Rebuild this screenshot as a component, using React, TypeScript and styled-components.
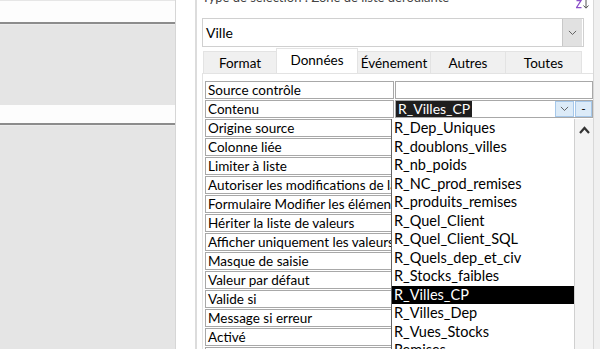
import styled, { createGlobalStyle } from 'styled-components'

const GlobalStyle = createGlobalStyle`
  html, body { margin: 0; padding: 0; background: #fff; }
  body { font-family: Lato, "Noto Sans", sans-serif; color: #000; }
`

const rows = [
  'Source contrôle',
  'Contenu',
  'Origine source',
  'Colonne liée',
  'Limiter à liste',
  'Autoriser les modifications de la liste de valeurs',
  'Formulaire Modifier les éléments de liste',
  'Hériter la liste de valeurs',
  'Afficher uniquement les valeurs de la source',
  'Masque de saisie',
  'Valeur par défaut',
  'Valide si',
  'Message si erreur',
  'Activé',
  'Verrouillé',
]

const listItems = [
  'R_Dep_Uniques',
  'R_doublons_villes',
  'R_nb_poids',
  'R_NC_prod_remises',
  'R_produits_remises',
  'R_Quel_Client',
  'R_Quel_Client_SQL',
  'R_Quels_dep_et_civ',
  'R_Stocks_faibles',
  'R_Villes_CP',
  'R_Villes_Dep',
  'R_Vues_Stocks',
  'Remises',
]

const tabs = ['Format', 'Données', 'Événement', 'Autres', 'Toutes']
const tabWidths = [74, 82, 74, 76, 77]

const Chevron = ({ size = 9 }: { size?: number }) => (
  <svg width={size} height={size * 0.6} viewBox="0 0 10 6">
    <path d="M1 1 L5 5 L9 1" fill="none" stroke="#555" strokeWidth="1" />
  </svg>
)

const App = () => {
  return (
    <>
      <GlobalStyle />
      <Screen>
        <LeftPane>
          <TopBand />
          <Rule />
          <GrayBlock $height={80} />
          <WhiteBand />
          <Rule />
          <GrayBlock $grow />
        </LeftPane>
        <Gutter />
        <Sheet>
          <Caption>
            <CaptionText>Type de sélection : Zone de liste déroulante</CaptionText>
            <SortIcon>
              <svg width="14" height="9" viewBox="0 0 14 9">
                <path d="M0.5 0.6 H5 L0.5 7.6 H5.5" fill="none" stroke="#8b4fc9" strokeWidth="1.2" />
                <path d="M10 0 V8 M7.5 5.5 L10 8.2 L12.5 5.5" fill="none" stroke="#555" strokeWidth="1" />
              </svg>
            </SortIcon>
          </Caption>
          <Combo>
            <ComboText>Ville</ComboText>
            <ComboButton>
              <Chevron />
            </ComboButton>
          </Combo>
          <TabRow>
            {tabs.map((t, i) => (
              <Tab key={t} $active={i === 1} style={{ width: tabWidths[i] }}>
                {t}
              </Tab>
            ))}
          </TabRow>
          <Panel>
            <Grid>
              {rows.map((r, i) => (
                <Row key={r}>
                  <Label>{r}</Label>
                  <Value>
                    {i === 1 && (
                      <>
                        <Selected>R_Villes_CP</Selected>
                        <Spacer />
                        <RowButton $wide>
                          <Chevron />
                        </RowButton>
                        <RowButton>-</RowButton>
                      </>
                    )}
                  </Value>
                </Row>
              ))}
            </Grid>
            <DropList>
              <Items>
                {listItems.map((it) => (
                  <Item key={it} $active={it === 'R_Villes_CP'}>
                    {it}
                  </Item>
                ))}
              </Items>
              <ScrollTrack>
                <svg width="11" height="8" viewBox="0 0 11 8">
                  <path d="M1 7 L5.5 2 L10 7" fill="none" stroke="#333" strokeWidth="2.2" />
                </svg>
              </ScrollTrack>
            </DropList>
          </Panel>
        </Sheet>
        <SideBar />
      </Screen>
    </>
  )
}

export default App

const Screen = styled.div`
  display: flex;
  width: 600px;
  height: 349px;
  overflow: hidden;
  background: #fff;
`

const LeftPane = styled.div`
  width: 175px;
  flex: none;
  display: flex;
  flex-direction: column;
  border-right: 1px solid #d6d6d6;
`

const TopBand = styled.div`
  height: 21px;
  flex: none;
  border-top: 1px solid #e6e6e6;
  background: #fdfdfd;
`

const Rule = styled.div`
  height: 2px;
  flex: none;
  background: #8c8c8c;
`

const GrayBlock = styled.div<{ $height?: number; $grow?: boolean }>`
  flex: ${(p) => (p.$grow ? '1' : 'none')};
  height: ${(p) => (p.$height ? `${p.$height}px` : 'auto')};
  background: #e5e5e5;
  border-top: 1px solid #ececec;
`

const WhiteBand = styled.div`
  height: 18px;
  flex: none;
  background: #fdfdfd;
`

const Gutter = styled.div`
  width: 19px;
  flex: none;
  border-right: 2px solid #dcdcdc;
  background: #fff;
`

const Sheet = styled.div`
  flex: 1;
  display: flex;
  flex-direction: column;
  padding-left: 5px;
  font-size: 13px;
`

const Caption = styled.div`
  display: flex;
  justify-content: space-between;
  align-items: flex-start;
  height: 18px;
  flex: none;
  padding-right: 3px;
  overflow: hidden;
`

const CaptionText = styled.span`
  margin-top: -11px;
  font-size: 13px;
  line-height: 16px;
  color: #444;
  white-space: nowrap;
`

const SortIcon = styled.span`
  display: flex;
`

const Combo = styled.div`
  display: flex;
  align-items: center;
  width: 382px;
  height: 29px;
  flex: none;
  box-sizing: border-box;
  border: 1px solid #d0d0d0;
  background: #fff;
`

const ComboText = styled.div`
  flex: 1;
  padding-left: 3px;
  font-size: 14px;
`

const ComboButton = styled.div`
  display: flex;
  align-items: center;
  justify-content: center;
  width: 20px;
  height: 27px;
  margin-right: 1px;
  box-sizing: border-box;
  background: #e1e1e1;
  border-left: 1px solid #c8c8c8;
`

const TabRow = styled.div`
  display: flex;
  align-items: flex-end;
  height: 26px;
  flex: none;
  margin-left: 1px;
`

const Tab = styled.div<{ $active?: boolean }>`
  display: flex;
  align-items: center;
  justify-content: center;
  box-sizing: border-box;
  height: ${(p) => (p.$active ? '25px' : '22px')};
  padding-bottom: ${(p) => (p.$active ? '3px' : '0')};
  background: ${(p) => (p.$active ? '#fff' : '#f0f0f0')};
  border: 1px solid #e3e3e3;
  border-bottom: none;
  margin-right: -1px;
  font-size: 13.5px;
`

const Panel = styled.div`
  position: relative;
  flex: 1;
  border-left: 1px solid #e3e3e3;
  border-top: 1px solid #e3e3e3;
  padding: 7px 0 0 2px;
  overflow: hidden;
`

const Grid = styled.div`
  display: flex;
  flex-direction: column;
  gap: 1px;
  width: 388px;
`

const Row = styled.div`
  display: flex;
  gap: 1px;
  height: 18px;
`

const Label = styled.div`
  width: 189px;
  flex: none;
  box-sizing: border-box;
  border: 1px solid #a8a8a8;
  padding-left: 2px;
  font-size: 13.5px;
  line-height: 16px;
  white-space: nowrap;
  overflow: hidden;
`

const Value = styled.div`
  flex: 1;
  display: flex;
  align-items: stretch;
  box-sizing: border-box;
  border: 1px solid #a8a8a8;
`

const Selected = styled.span`
  background: #1e1e1e;
  color: #fff;
  padding: 0 2px;
  font-size: 14px;
  line-height: 16px;
`

const Spacer = styled.span`
  flex: 1;
`

const RowButton = styled.span<{ $wide?: boolean }>`
  display: flex;
  align-items: center;
  justify-content: center;
  width: ${(p) => (p.$wide ? '19px' : '17px')};
  margin-left: ${(p) => (p.$wide ? '0' : '1px')};
  box-sizing: border-box;
  background: #dcebf8;
  border: 1px solid #a6c8ea;
  font-size: 12px;
  line-height: 1;
`

const DropList = styled.div`
  position: absolute;
  left: 188px;
  top: 45px;
  width: 202px;
  bottom: 0;
  display: flex;
  background: #fff;
  border-left: 1px solid #646464;
`

const Items = styled.div`
  flex: 1;
  display: flex;
  flex-direction: column;
  border-right: 1px solid #d0d0d0;
`

const Item = styled.div<{ $active?: boolean }>`
  height: 18.5px;
  flex: none;
  line-height: 18px;
  padding-left: 2px;
  font-size: 14.5px;
  white-space: nowrap;
  background: ${(p) => (p.$active ? '#000' : 'transparent')};
  color: ${(p) => (p.$active ? '#fff' : '#000')};
`

const ScrollTrack = styled.div`
  width: 18px;
  flex: none;
  display: flex;
  justify-content: center;
  padding-top: 7px;
  background: #f3f3f3;
  border-right: 1px solid #c8c8c8;
`

const SideBar = styled.div`
  width: 7px;
  flex: none;
  background: #f0f0f0;
  border-left: 1px solid #d8d8d8;
`
